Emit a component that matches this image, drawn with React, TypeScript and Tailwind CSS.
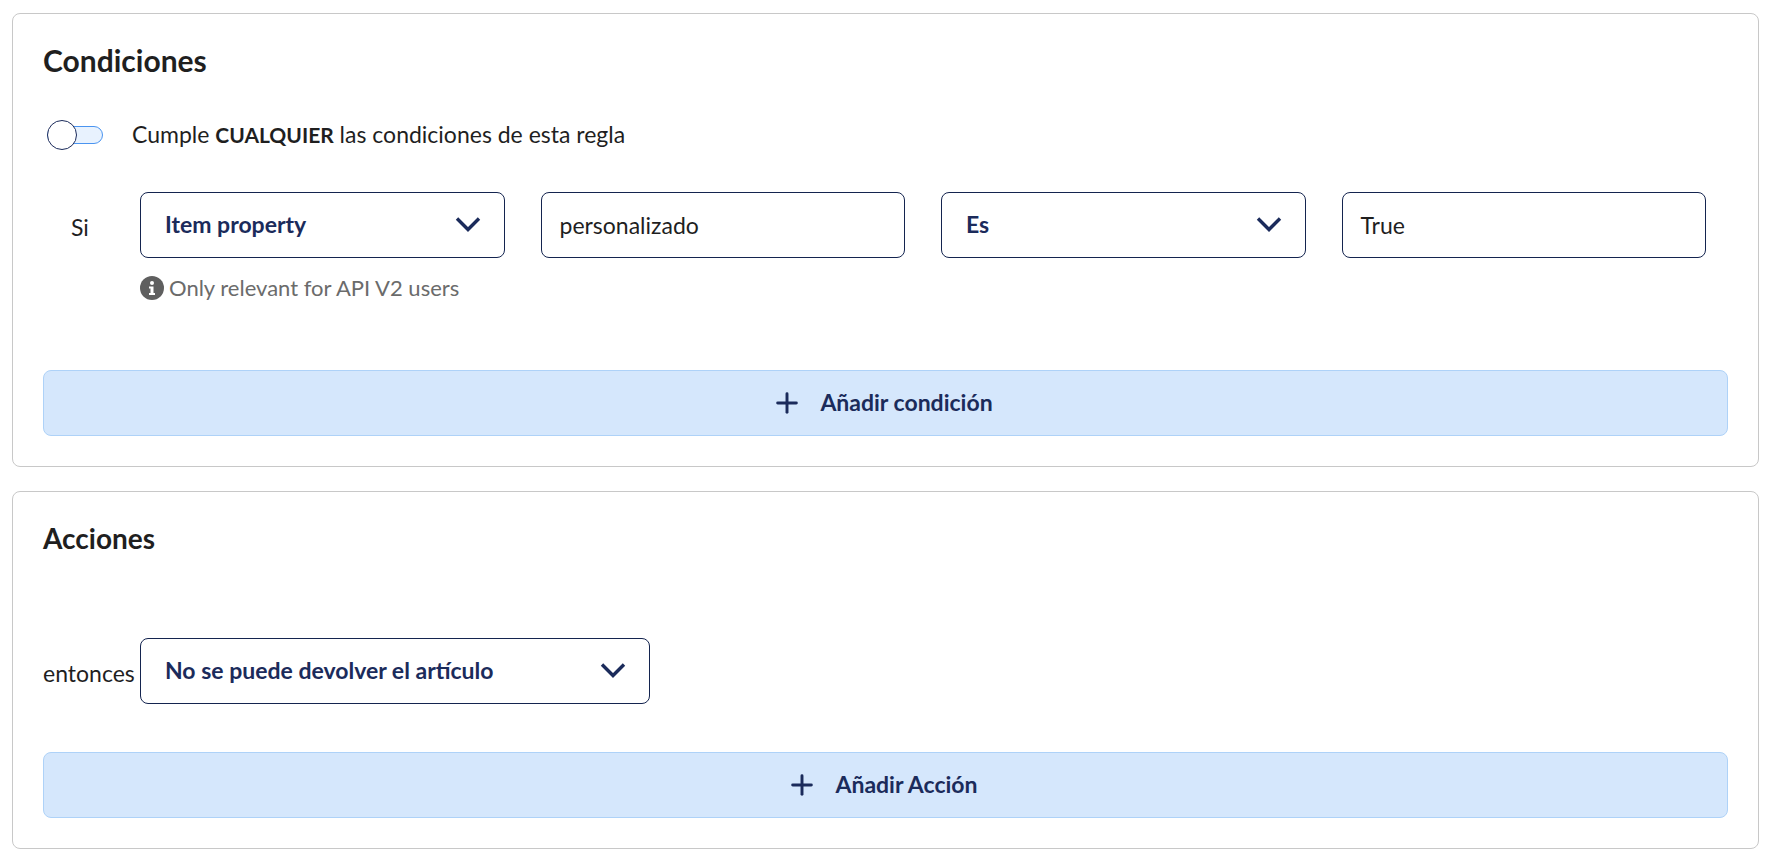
import { Plus } from 'lucide-react'

const FONT = "font-['Lato','Open_Sans',sans-serif]"

function SelectBox({ label, className, textClass }: { label: string; className: string; textClass?: string }) {
  return (
    <div className={`flex h-[66px] items-center justify-between rounded-lg border border-[#14244f] bg-white pl-[24px] pr-[23px] ${className}`}>
      <span className={`text-[23px] font-bold text-[#1b2b5b] ${textClass ?? ''}`}>{label}</span>
      <svg width="26" height="16" viewBox="0 0 26 16" fill="none" className="mb-[2px]">
        <path d="M2 2.5 13 13.5 24 2.5" stroke="#1b2b5b" strokeWidth="3.4" />
      </svg>
    </div>
  )
}

function TextBox({ value }: { value: string }) {
  return (
    <div className="flex h-[66px] items-center rounded-lg border border-[#14244f] bg-white pl-[18px] text-[23px] text-[#1f1f1f]">
      {value}
    </div>
  )
}

function AddButton({ label }: { label: string }) {
  return (
    <button className="flex h-[66px] w-full items-center justify-center gap-[17px] rounded-lg border border-[#aed2f8] bg-[#d5e7fc] pb-[1px] pr-[7px] text-[23px] font-bold text-[#1b2b5b]">
      <Plus size={32} strokeWidth={2.2} />
      {label}
    </button>
  )
}

export default function App() {
  return (
    <div className={`${FONT} flex min-h-[862px] flex-col gap-6 bg-white pl-3 pr-[19px] pt-[13px] text-[#1f1f1f]`}>
      <section className="flex h-[454px] flex-col rounded-lg border border-[#c8c8c8] px-[30px]">
        <h2 className="mt-[28px] text-[30px] font-bold leading-[36px]">Condiciones</h2>
        <div className="mt-[40px] flex h-[33px] items-center">
          <div className="relative ml-[4px] h-[18px] w-[56px] rounded-full border border-[#4a94f0] bg-[#e8f2fe]">
            <div className="absolute left-[-1px] top-[-7px] h-[30px] w-[30px] rounded-full border border-[#1b2b5b] bg-white" />
          </div>
          <p className="ml-[29px] text-[23px]">
            Cumple <strong className="text-[21px]">CUALQUIER</strong> las condiciones de esta regla
          </p>
        </div>
        <div className="mt-[41px] flex items-start pr-[22px]">
          <div className="flex h-[66px] w-[97px] shrink-0 items-center pl-[28px] pt-[4px] text-[23px]">Si</div>
          <div className="grid flex-1 grid-cols-4 gap-[36px]">
            <div>
              <SelectBox label="Item property" className="w-full" textClass="mb-[2px]" />
              <div className="mt-[13px] flex items-center gap-[5px] text-[22px] text-[#6b6b6b]">
                <svg width="24" height="24" viewBox="0 0 24 24">
                  <circle cx="12" cy="12" r="12" fill="#5f5f5f" />
                  <circle cx="12" cy="7" r="2" fill="#fff" />
                  <path d="M9 10.5h4.5V17H15v2H9v-2h1.5v-4.5H9z" fill="#fff" />
                </svg>
                Only relevant for API V2 users
              </div>
            </div>
            <TextBox value="personalizado" />
            <SelectBox label="Es" className="w-full" textClass="mb-[2px]" />
            <TextBox value="True" />
          </div>
        </div>
        <div className="mt-auto mb-[30px]">
          <AddButton label="Añadir condición" />
        </div>
      </section>
      <section className="flex h-[358px] flex-col rounded-lg border border-[#c8c8c8] px-[30px]">
        <h2 className="mt-[28px] text-[28px] font-bold leading-[36px]">Acciones</h2>
        <div className="mt-[82px] flex items-center">
          <span className="w-[97px] shrink-0 pt-[5px] text-[23px]">entonces</span>
          <SelectBox label="No se puede devolver el artículo" className="w-[510px]" textClass="mb-[2px]" />
        </div>
        <div className="mt-auto mb-[30px]">
          <AddButton label="Añadir Acción" />
        </div>
      </section>
    </div>
  )
}
